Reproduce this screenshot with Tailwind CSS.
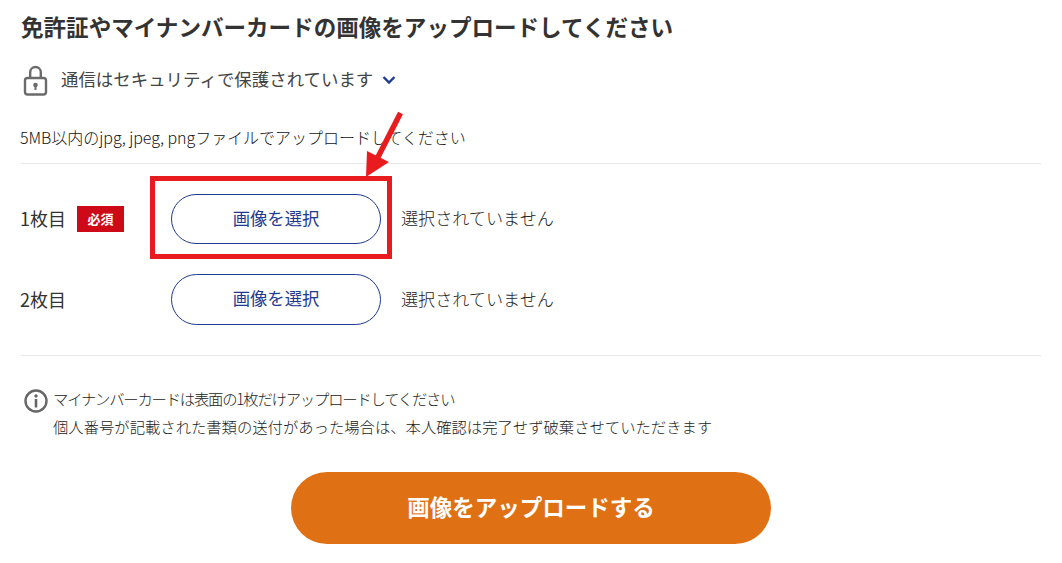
<!DOCTYPE html>
<html lang="ja"><head><meta charset="utf-8">
<script src="https://cdn.jsdelivr.net/npm/@tailwindcss/browser@4"></script>
</head>
<body class="bg-white overflow-hidden font-['Noto_Sans_CJK_JP','Noto_Sans',sans-serif] text-[#333]">
<div class="relative w-[1062px] h-[563px] overflow-hidden pl-[21px] pr-[21px] pt-[11px]">
  <h1 class="text-[22.55px] leading-[30px] font-bold text-[#333]">免許証やマイナンバーカードの画像をアップロードしてください</h1>
  <div class="flex items-center mt-[21px] h-[36px]">
    <svg class="w-[30px] h-[32px] ml-[1px] mt-[1px]" viewBox="0 0 30 32" fill="none"><path d="M8.2 13V7.3a5.3 5.3 0 0 1 10.6 0V13" stroke="#6b6b6b" stroke-width="2.4"/><rect x="3" y="13" width="21" height="16.5" rx="2.5" stroke="#6b6b6b" stroke-width="2.4"/><circle cx="13.5" cy="20" r="2.3" fill="#6b6b6b"/><rect x="12.5" y="20" width="2" height="5" fill="#6b6b6b"/></svg>
    <span class="ml-[9px] -mt-[2px] text-[17.45px] leading-[24px] text-[#444]">通信はセキュリティで保護されています</span>
    <svg class="w-[14px] h-[10px] ml-[9px]" viewBox="0 0 14 10" fill="none"><path d="M1.5 2l5.5 5.5L12.5 2" stroke="#1d3c8f" stroke-width="2.4"/></svg>
  </div>
  <p class="mt-[27px] text-[16px] leading-[24px] font-light text-[#111] -ml-[1px] tracking-[-0.03px]">5MB以内のjpg, jpeg, pngファイルでアップロードしてください</p>
  <div class="mt-[14px] border-t border-[#e8e8e8]"></div>
  <div class="flex items-center mt-[30px] h-[50px]">
    <div class="w-[150px] flex items-center"><span class="text-[18px] w-[57px] -ml-[1px] -mt-[2px]">1枚目</span><span class="w-[47px] h-[26px] bg-[#cf0a18] text-white text-[13px] font-bold flex items-center justify-center">必須</span></div>
    <button class="w-[210px] h-[50px] pb-[3px] rounded-full border border-[#1d3c8f] text-[#1d3c8f] text-[17.33px]">画像を選択</button>
    <span class="ml-[20px] -mt-[2px] text-[17.1px] text-[#222] font-light">選択されていません</span>
  </div>
  <div class="flex items-center mt-[30px] h-[51px]">
    <div class="w-[150px]"><span class="text-[18px] -ml-[1px]">2枚目</span></div>
    <button class="w-[210px] h-[51px] pb-[3px] rounded-full border border-[#1d3c8f] text-[#1d3c8f] text-[17.33px]">画像を選択</button>
    <span class="ml-[20px] -mt-[2px] text-[17.1px] text-[#222] font-light">選択されていません</span>
  </div>
  <div class="mt-[30px] border-t border-[#e8e8e8]"></div>
  <div class="flex mt-[30px]">
    <svg class="w-[26px] h-[26px] mt-[2px] ml-[2px]" viewBox="0 0 26 26" fill="none"><circle cx="13" cy="13" r="10.5" stroke="#666" stroke-width="2.4"/><circle cx="13" cy="8" r="1.7" fill="#666"/><rect x="11.7" y="11" width="2.6" height="8.5" fill="#666"/></svg>
    <div class="ml-[4px] text-[15.33px] leading-[27px] font-light text-[#222]">
      <p class="tracking-[-1.2px] -mt-[1px]">マイナンバーカードは表面の1枚だけアップロードしてください</p>
      <p class="mt-[1px]">個人番号が記載された書類の送付があった場合は、本人確認は完了せず破棄させていただきます</p>
    </div>
  </div>
  <div class="flex justify-center mt-[32px] w-[1020px]">
    <button class="w-[480px] h-[72px] pb-[2px] rounded-full bg-[#e07014] text-white text-[22.5px] font-bold">画像をアップロードする</button>
  </div>
  <div class="absolute left-[150px] top-[176px] w-[242px] h-[83px] border-[5px] border-[#e81c1f]"></div>
  <svg class="absolute left-[360px] top-[110px]" width="45" height="70" viewBox="0 0 45 70" fill="none"><path d="M40.5 3L18 47" stroke="#e81c1f" stroke-width="5.5"/><path d="M6 67L29 52L7 41Z" fill="#e81c1f"/></svg>
</div>
</body></html>
